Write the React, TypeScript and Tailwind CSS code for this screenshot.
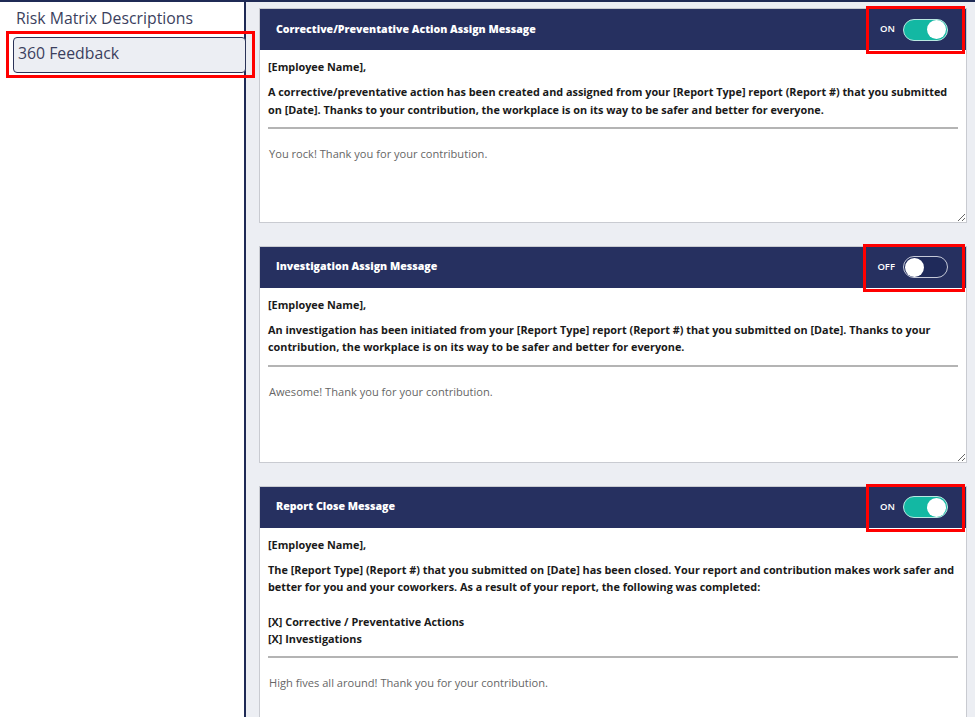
import React from "react";

function Toggle({ on }: { on: boolean }) {
  return (
    <div className="relative flex items-center gap-[8px] h-full pr-[18px] pl-[14px]">
      <div className="absolute left-0 right-[1px] top-[-3px] bottom-[-4px] border-[3px] border-[#ff0000] pointer-events-none" />
      <span className="text-[9.5px] font-semibold text-white">{on ? "ON" : "OFF"}</span>
      {on ? (
        <div className="w-[45px] h-[22px] rounded-full bg-[#13b8a3] border-[1.5px] border-[#b9e8e1] flex items-center justify-end pr-[1px]">
          <div className="w-[19px] h-[19px] rounded-full bg-white" />
        </div>
      ) : (
        <div className="w-[45px] h-[22px] rounded-full bg-[#1f2a5a] border-[1.5px] border-[#c5c9d8] flex items-center justify-start pl-[1px]">
          <div className="w-[19px] h-[19px] rounded-full bg-white" />
        </div>
      )}
    </div>
  );
}

function Card({
  title,
  on,
  children,
  reply,
  taHeight,
}: {
  title: string;
  on: boolean;
  children: React.ReactNode;
  reply: string;
  taHeight: string;
}) {
  return (
    <div className="bg-white border border-[#c9cbd1]">
      <div className="h-[41px] bg-[#263060] flex items-center justify-between">
        <span className="pl-[16px] text-white text-[10.6px] font-extrabold whitespace-nowrap">{title}</span>
        <Toggle on={on} />
      </div>
      <div className="pt-[8px] px-[8px] text-[10.85px] font-bold text-[#1a1a1a] leading-[17.25px] whitespace-nowrap">
        {children}
      </div>
      <div className="mx-[8px] mt-[9px] h-[2px] bg-[#b4b4b4]" />
      <textarea
        className={`block w-full ${taHeight} px-[9px] pt-[17px] text-[11.1px] text-[#666] leading-[16px] outline-none border-0 resize-y`}
        defaultValue={reply}
      />
    </div>
  );
}

export default function App() {
  return (
    <div
      className="w-[975px] h-[717px] overflow-hidden flex flex-col bg-[#eceef3]"
      style={{ fontFamily: '"Open Sans", "Noto Sans", sans-serif' }}
    >
      <div className="h-[2px] bg-[#1f2a55] shrink-0" />
      <div className="flex flex-1 min-h-0">
        <aside className="relative z-10 w-[246px] shrink-0 bg-white border-r-2 border-[#1f2a55]">
          <div className="pl-[16px] pt-[5px] h-[33px] text-[15.8px] text-[#3b3f5e]">Risk Matrix Descriptions</div>
          <div className="relative ml-[13px] mr-[-2px] mt-[2px] h-[36px]">
            <div className="absolute left-[-7px] right-[-9px] top-[-6px] bottom-[-5px] border-[3px] border-[#ff0000]" />
            <div className="h-full rounded-[4px] border border-[#2b3358] bg-[#eceef3] flex items-center pl-[4px] pb-[2px] text-[15.8px] text-[#3b3f5e]">
              360 Feedback
            </div>
          </div>
        </aside>
        <main className="flex-1 min-w-0 pl-[13px] pr-[8px] pt-[6px] flex flex-col gap-[23px]">
          <Card
            title="Corrective/Preventative Action Assign Message"
            on={true}
            reply="You rock! Thank you for your contribution."
            taHeight="h-[93px]"
          >
            <p>[Employee Name],</p>
            <p className="mt-[8px]">
              A corrective/preventative action has been created and assigned from your [Report Type] report (Report #) that you submitted
              <br />
              on [Date]. Thanks to your contribution, the workplace is on its way to be safer and better for everyone.
            </p>
          </Card>
          <Card
            title="Investigation Assign Message"
            on={false}
            reply="Awesome! Thank you for your contribution."
            taHeight="h-[95px]"
          >
            <p>[Employee Name],</p>
            <p className="mt-[8px]">
              An investigation has been initiated from your [Report Type] report (Report #) that you submitted on [Date]. Thanks to your
              <br />
              contribution, the workplace is on its way to be safer and better for everyone.
            </p>
          </Card>
          <Card
            title="Report Close Message"
            on={true}
            reply="High fives all around! Thank you for your contribution."
            taHeight="h-[94px]"
          >
            <p>[Employee Name],</p>
            <p className="mt-[8px]">
              The [Report Type] (Report #) that you submitted on [Date] has been closed. Your report and contribution makes work safer and
              <br />
              better for you and your coworkers. As a result of your report, the following was completed:
              <br />
              <br />
              [X] Corrective / Preventative Actions
              <br />
              [X] Investigations
            </p>
          </Card>
        </main>
      </div>
    </div>
  );
}
